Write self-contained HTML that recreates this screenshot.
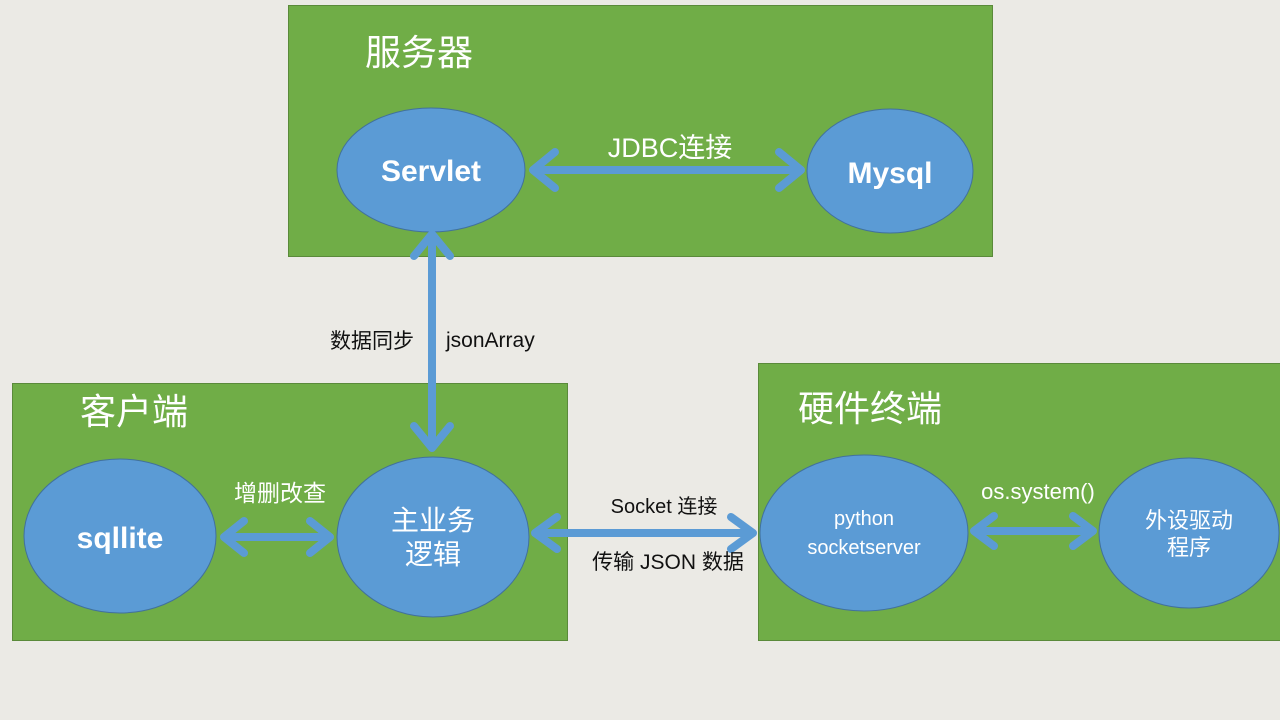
<!DOCTYPE html>
<html><head><meta charset="utf-8"><style>
html,body{margin:0;padding:0;background:#ebeae5;}
svg{display:block}
text{font-family:"Liberation Sans","Noto Sans CJK SC",sans-serif;}
</style></head><body>
<svg width="1280" height="720" viewBox="0 0 1280 720" xmlns="http://www.w3.org/2000/svg">
<rect width="1280" height="720" fill="#ebeae5"/>
<g fill="#70ad47" stroke="#5a8a3a" stroke-width="1">
<rect x="288.5" y="5.5" width="704" height="251"/>
<rect x="12.5" y="383.5" width="555" height="257"/>
<rect x="758.5" y="363.5" width="530" height="277"/>
</g>
<g fill="#5b9bd5" stroke="#41719c" stroke-width="1">
<ellipse cx="431" cy="170" rx="94" ry="62"/>
<ellipse cx="890" cy="171" rx="83" ry="62"/>
<ellipse cx="120" cy="536" rx="96" ry="77"/>
<ellipse cx="433" cy="537" rx="96" ry="80"/>
<ellipse cx="864" cy="533" rx="104" ry="78"/>
<ellipse cx="1189" cy="533" rx="90" ry="75"/>
</g>
<g stroke="#5b9bd5" stroke-width="8" stroke-linecap="round" stroke-linejoin="round" fill="none">
<path d="M533 170 H801 M555 152 L533 170 L555 188 M779 152 L801 170 L779 188"/>
<path d="M432 234 V448 M414 256 L432 234 L450 256 M414 426 L432 448 L450 426"/>
<path d="M224 537 H330 M244 521 L224 537 L244 553 M310 521 L330 537 L310 553"/>
<path d="M535 533 H753 M557 517 L535 533 L557 549 M731 517 L753 533 L731 549"/>
<path d="M974 531 H1093 M994 516 L974 531 L994 546 M1073 516 L1093 531 L1073 546"/>
</g>
<g fill="#fff">
<text x="365" y="65" font-size="36">服务器</text>
<text x="80" y="424" font-size="36">客户端</text>
<text x="798" y="421" font-size="36">硬件终端</text>
<text x="431" y="181" font-size="30" font-weight="bold" text-anchor="middle">Servlet</text>
<text x="890" y="183" font-size="30" font-weight="bold" text-anchor="middle">Mysql</text>
<text x="120" y="548" font-size="30" font-weight="bold" text-anchor="middle">sqllite</text>
<text x="433" y="530" font-size="28" text-anchor="middle">主业务</text>
<text x="433" y="564" font-size="28" text-anchor="middle">逻辑</text>
<text x="864" y="525" font-size="20" text-anchor="middle">python</text>
<text x="864" y="554" font-size="20" text-anchor="middle">socketserver</text>
<text x="1189" y="528" font-size="22" text-anchor="middle">外设驱动</text>
<text x="1189" y="555" font-size="22" text-anchor="middle">程序</text>
<text x="670" y="157" font-size="27" text-anchor="middle">JDBC连接</text>
<text x="280" y="501" font-size="23" text-anchor="middle">增删改查</text>
<text x="1038" y="499" font-size="22" text-anchor="middle">os.system()</text>
</g>
<g fill="#111">
<text x="330" y="348" font-size="21">数据同步</text>
<text x="446" y="347" font-size="21">jsonArray</text>
<text x="664" y="513" font-size="20" text-anchor="middle">Socket 连接</text>
<text x="668" y="569" font-size="21" text-anchor="middle">传输 JSON 数据</text>
</g>
</svg>
</body></html>
